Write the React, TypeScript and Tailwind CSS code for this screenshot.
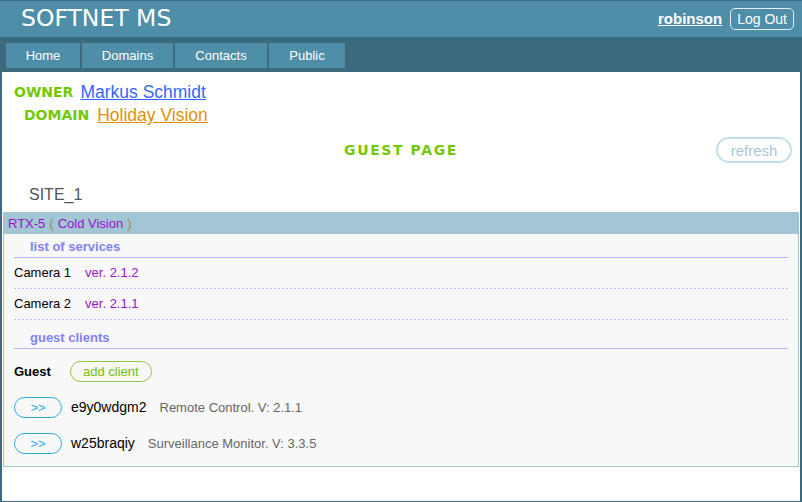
import React from "react";

const NAV = [
  { label: "Home", w: "w-[74px]" },
  { label: "Domains", w: "w-[91px]" },
  { label: "Contacts", w: "w-[92px]" },
  { label: "Public", w: "w-[76px]" },
];

const CLIENTS = [
  { id: "e9y0wdgm2", app: "Remote Control. V: 2.1.1" },
  { id: "w25braqiy", app: "Surveillance Monitor. V: 3.3.5" },
];

function SectionTitle({ children, top }: { children: React.ReactNode; top: string }) {
  return (
    <div className={`${top} pb-[2px] pl-[16px] border-b border-[#b4b4f4] leading-[16px] text-[13px] font-bold text-[#8282f0]`}>
      {children}
    </div>
  );
}

function Dotted() {
  return <div className="h-px bg-[linear-gradient(to_right,#b8b8f4_50%,transparent_50%)] bg-[length:4px_1px]" />;
}

export default function App() {
  return (
    <div className="w-[802px] h-[502px] bg-[#3d6b7e] flex flex-col font-['Liberation_Sans',Arial,sans-serif]">
      {/* top bar */}
      <div className="mt-px h-[36px] bg-[#4f8ea8] flex items-center justify-between pl-[21px] pr-[8px]">
        <div className="text-[23.5px] text-white font-['DejaVu_Sans',Verdana,sans-serif] leading-none">SOFTNET MS</div>
        <div className="flex items-center gap-[8px]">
          <a className="text-[15px] font-bold text-white underline">robinson</a>
          <button className="h-[22px] px-[6px] rounded-[5px] border border-[#e4eef2] text-[14px] text-white leading-none">Log Out</button>
        </div>
      </div>

      {/* nav */}
      <div className="h-[35px] flex gap-[2px] px-[6px] pt-[6px]">
        {NAV.map((n) => (
          <div key={n.label} className={`${n.w} h-[25px] bg-[#4f8ea8] flex items-center justify-center text-[13px] text-white`}>{n.label}</div>
        ))}
      </div>

      {/* content */}
      <div className="flex-1 mx-[2px] mb-px bg-white flex flex-col">
        <div className="pt-[9px] pl-[12px]">
          <div className="flex items-center h-[23px]">
            <span className="font-['DejaVu_Sans',Verdana,sans-serif] font-bold text-[14px] text-[#73c900]">OWNER</span>
            <a className="ml-[7px] text-[17.5px] text-[#3366ff] underline">Markus Schmidt</a>
          </div>
          <div className="flex items-center h-[23px] pl-[10px]">
            <span className="font-['DejaVu_Sans',Verdana,sans-serif] font-bold text-[14px] text-[#73c900]">DOMAIN</span>
            <a className="ml-[8px] text-[17.5px] text-[#e39000] underline">Holiday Vision</a>
          </div>
        </div>

        <div className="mt-[10px] h-[26px] relative flex items-center justify-center">
          <span className="font-['DejaVu_Sans',Verdana,sans-serif] font-bold text-[14px] tracking-[1.6px] text-[#73c900]">GUEST PAGE</span>
          <button className="absolute right-[8px] top-0 h-[26px] w-[76px] rounded-full border-2 border-[#c3dfe9] text-[15px] text-[#a8c8d6] leading-none">refresh</button>
        </div>

        <div className="mt-[22px] h-[20px] pl-[27px] flex items-center text-[16px] text-[#555]">SITE_1</div>

        {/* site card */}
        <div className="mt-[7px] mx-px border border-[#a3c6d4] bg-[#f8f8f8]">
          <div className="h-[21px] bg-[#a3c6d4] pl-[4px] flex items-center text-[13px]">
            <span className="text-[#9911cc]">RTX-5</span>
            <span className="ml-[4px] text-[#998866]">(</span>
            <span className="ml-[4px] text-[#9911cc]">Cold Vision</span>
            <span className="ml-[4px] text-[#998866]">)</span>
          </div>
          <div className="px-[10px] pb-[12px]">
            <SectionTitle top="pt-[5px]">list of services</SectionTitle>
            <div className="h-[30px] flex items-center text-[13px]">
              <span className="text-black">Camera 1</span>
              <span className="ml-[14px] text-[#9911cc]">ver. 2.1.2</span>
            </div>
            <Dotted />
            <div className="h-[30px] flex items-center text-[13px]">
              <span className="text-black">Camera 2</span>
              <span className="ml-[14px] text-[#9911cc]">ver. 2.1.1</span>
            </div>
            <Dotted />
            <SectionTitle top="pt-[10px]">guest clients</SectionTitle>

            <div className="mt-[12px] h-[21px] flex items-center">
              <span className="text-[13px] font-bold text-black">Guest</span>
              <button className="ml-[19px] h-[21px] w-[82px] rounded-full border border-[#8cc63f] text-[13px] text-[#78c000] leading-none">add client</button>
            </div>

            {CLIENTS.map((c) => (
              <div key={c.id} className="mt-[15px] h-[21px] flex items-center">
                <button className="h-[21px] w-[48px] rounded-full border border-[#29abe2] text-[13px] text-[#29abe2] leading-none">&gt;&gt;</button>
                <span className="ml-[9px] text-[14px] text-black">{c.id}</span>
                <span className="ml-[13px] text-[13px] text-[#666]">{c.app}</span>
              </div>
            ))}
          </div>
        </div>
      </div>
    </div>
  );
}
